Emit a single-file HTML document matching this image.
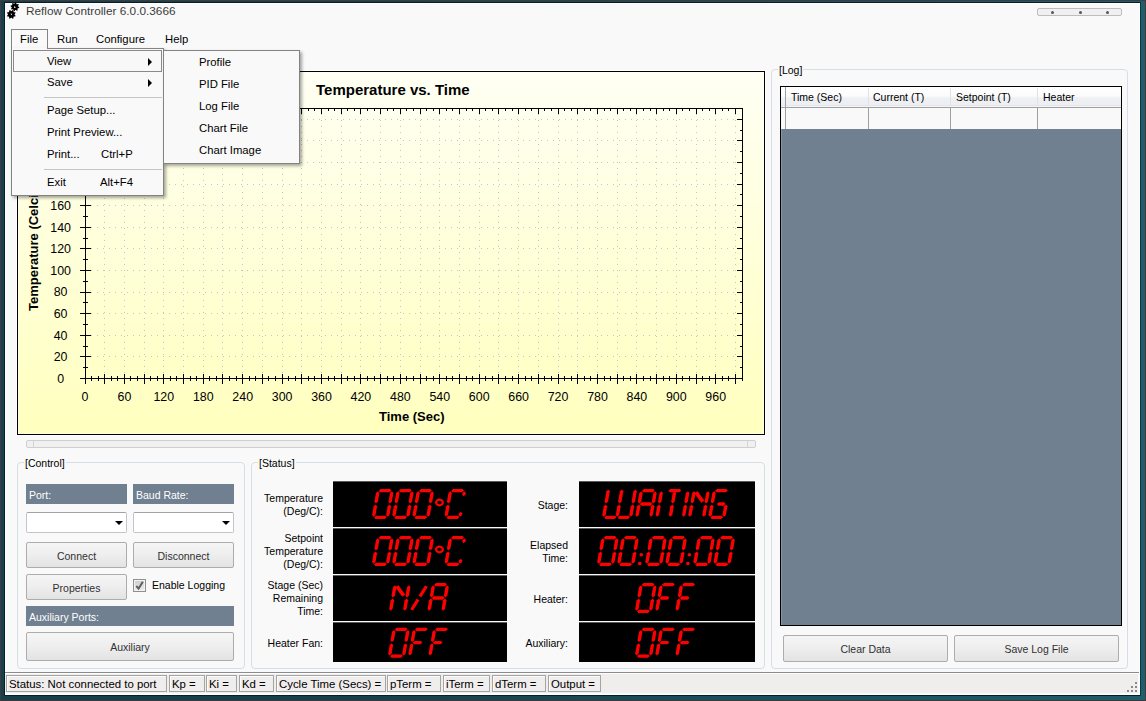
<!DOCTYPE html>
<html><head><meta charset="utf-8"><style>
html,body{margin:0;padding:0;width:1146px;height:701px;overflow:hidden}
body{background:#1f5566;position:relative;font-family:'Liberation Sans', sans-serif}
.abs{position:absolute;box-sizing:content-box}
#frame{position:absolute;left:0;top:0;width:1146px;height:701px;background:linear-gradient(90deg,#173f4c 0,#183f4b 30%,#1f5e6c 100%)}
#content{position:absolute;left:5px;top:3px;width:1133px;height:690px;background:#f9f9f9;border:1px solid #fff}
.menu{font:11.3px 'Liberation Sans', sans-serif;color:#000;white-space:nowrap;line-height:14px}
.ax{font:12.4px 'Liberation Sans', sans-serif;color:#000;white-space:nowrap;line-height:14px}
.lbl{font:10.5px 'Liberation Sans', sans-serif;color:#000;white-space:nowrap;line-height:13px}
.bar{background:#708090;color:#fff;font:10.5px 'Liberation Sans', sans-serif;line-height:20px;padding-top:1px;padding-left:3px;box-sizing:border-box;white-space:nowrap}
.combo{border:1px solid #c2c6cc;border-top-color:#9fa3a8;border-radius:2px;background:#fff}
.btn{border:1px solid #adadad;border-radius:2px;background:linear-gradient(#f5f5f5,#eeeeee 50%,#e3e3e3);text-align:center;font:10.5px 'Liberation Sans', sans-serif;color:#303030;white-space:nowrap}
.gb{border:1px solid #d5dfe5;border-radius:4px}
.gbl{font:10.5px 'Liberation Sans', sans-serif;color:#000;background:#f9f9f9;padding:0 1px;line-height:13px;white-space:nowrap}
.sbp{border:1px solid #a4a4a4;box-shadow:inset 1px 1px 0 #fcfcfc;font:11.4px 'Liberation Sans', sans-serif;color:#000;padding-left:2px;line-height:16px;white-space:nowrap;overflow:hidden}
</style></head><body>
<div id="frame"></div>
<div class="abs" style="left:0;top:0;width:1146px;height:1px;background:#433b3b"></div>
<div class="abs" style="left:0;top:700px;width:1146px;height:1px;background:#3d3939"></div>
<div class="abs" style="left:0;top:0;width:1px;height:701px;background:#433b3b"></div>
<div class="abs" style="left:1145px;top:0;width:1px;height:701px;background:#433b3b"></div>
<div class="abs" style="left:4px;top:2px;width:1137px;height:694px;background:#03202a"></div>
<div class="abs" style="left:1140px;top:2px;width:1px;height:694px;background:#083a44"></div>
<div id="content"></div>
<svg class="abs" style="left:6px;top:2px" width="16" height="19" viewBox="0 0 16 19">
<polygon points="13.28,5.24 13.11,6.08 11.81,6.36 11.45,6.90 11.69,8.21 10.97,8.68 9.85,7.96 9.22,8.08 8.46,9.18 7.62,9.01 7.34,7.71 6.80,7.35 5.49,7.59 5.02,6.87 5.74,5.75 5.62,5.12 4.52,4.36 4.69,3.52 5.99,3.24 6.35,2.70 6.11,1.39 6.83,0.92 7.95,1.64 8.58,1.52 9.34,0.42 10.18,0.59 10.46,1.89 11.00,2.25 12.31,2.01 12.78,2.73 12.06,3.85 12.18,4.48" fill="#000"/><polygon points="9.60,13.73 9.26,14.54 7.92,14.57 7.44,15.04 7.40,16.38 6.58,16.71 5.61,15.79 4.95,15.78 3.97,16.70 3.16,16.36 3.13,15.02 2.66,14.54 1.32,14.50 0.99,13.68 1.91,12.71 1.92,12.05 1.00,11.07 1.34,10.26 2.68,10.23 3.16,9.76 3.20,8.42 4.02,8.09 4.99,9.01 5.65,9.02 6.63,8.10 7.44,8.44 7.47,9.78 7.94,10.26 9.28,10.30 9.61,11.12 8.69,12.09 8.68,12.75" fill="#000"/>
<polygon points="8.3,4.0 9.9,5.4 8.1,5.9" fill="#fff"/><polygon points="4.5,11.8 6.3,11.7 5.4,13.3" fill="#fff"/>
</svg><div class="abs" style="left:26px;top:4px;font:11.8px 'Liberation Sans', sans-serif;color:#3c3c3c;white-space:nowrap">Reflow Controller 6.0.0.3666</div><div class="abs" style="left:1037px;top:8px;width:83px;height:6px;border:1px solid #bdbdbd;border-radius:2px;background:#f0f0f0"></div><div class="abs" style="left:1051px;top:10.5px;width:3px;height:3px;border-radius:2px;background:#555"></div><div class="abs" style="left:1079px;top:10.5px;width:3px;height:3px;border-radius:2px;background:#555"></div><div class="abs" style="left:1106px;top:10.5px;width:3px;height:3px;border-radius:2px;background:#555"></div><svg class="abs" style="left:0;top:0" width="1146" height="701" shape-rendering="crispEdges"><defs><linearGradient id="cg" x1="0" y1="0" x2="0" y2="1"><stop offset="0" stop-color="#fffff4"/><stop offset="1" stop-color="#ffffbe"/></linearGradient></defs><rect x="16" y="70" width="750" height="366" fill="#ffffff"/><rect x="17.5" y="71.5" width="747" height="363" fill="url(#cg)" stroke="#000" stroke-width="1"/><rect x="18.5" y="72.5" width="745" height="361" fill="none" stroke="#ffffff" stroke-opacity="0.45" stroke-width="1"/><line x1="104.5" y1="373" x2="104.5" y2="110" stroke="#c4c4cc" stroke-width="1" stroke-dasharray="1 5"/><line x1="124.5" y1="373" x2="124.5" y2="110" stroke="#c4c4cc" stroke-width="1" stroke-dasharray="1 5"/><line x1="144.5" y1="373" x2="144.5" y2="110" stroke="#c4c4cc" stroke-width="1" stroke-dasharray="1 5"/><line x1="163.5" y1="373" x2="163.5" y2="110" stroke="#c4c4cc" stroke-width="1" stroke-dasharray="1 5"/><line x1="183.5" y1="373" x2="183.5" y2="110" stroke="#c4c4cc" stroke-width="1" stroke-dasharray="1 5"/><line x1="203.5" y1="373" x2="203.5" y2="110" stroke="#c4c4cc" stroke-width="1" stroke-dasharray="1 5"/><line x1="222.5" y1="373" x2="222.5" y2="110" stroke="#c4c4cc" stroke-width="1" stroke-dasharray="1 5"/><line x1="242.5" y1="373" x2="242.5" y2="110" stroke="#c4c4cc" stroke-width="1" stroke-dasharray="1 5"/><line x1="262.5" y1="373" x2="262.5" y2="110" stroke="#c4c4cc" stroke-width="1" stroke-dasharray="1 5"/><line x1="282.5" y1="373" x2="282.5" y2="110" stroke="#c4c4cc" stroke-width="1" stroke-dasharray="1 5"/><line x1="301.5" y1="373" x2="301.5" y2="110" stroke="#c4c4cc" stroke-width="1" stroke-dasharray="1 5"/><line x1="321.5" y1="373" x2="321.5" y2="110" stroke="#c4c4cc" stroke-width="1" stroke-dasharray="1 5"/><line x1="341.5" y1="373" x2="341.5" y2="110" stroke="#c4c4cc" stroke-width="1" stroke-dasharray="1 5"/><line x1="360.5" y1="373" x2="360.5" y2="110" stroke="#c4c4cc" stroke-width="1" stroke-dasharray="1 5"/><line x1="380.5" y1="373" x2="380.5" y2="110" stroke="#c4c4cc" stroke-width="1" stroke-dasharray="1 5"/><line x1="400.5" y1="373" x2="400.5" y2="110" stroke="#c4c4cc" stroke-width="1" stroke-dasharray="1 5"/><line x1="420.5" y1="373" x2="420.5" y2="110" stroke="#c4c4cc" stroke-width="1" stroke-dasharray="1 5"/><line x1="439.5" y1="373" x2="439.5" y2="110" stroke="#c4c4cc" stroke-width="1" stroke-dasharray="1 5"/><line x1="459.5" y1="373" x2="459.5" y2="110" stroke="#c4c4cc" stroke-width="1" stroke-dasharray="1 5"/><line x1="479.5" y1="373" x2="479.5" y2="110" stroke="#c4c4cc" stroke-width="1" stroke-dasharray="1 5"/><line x1="498.5" y1="373" x2="498.5" y2="110" stroke="#c4c4cc" stroke-width="1" stroke-dasharray="1 5"/><line x1="518.5" y1="373" x2="518.5" y2="110" stroke="#c4c4cc" stroke-width="1" stroke-dasharray="1 5"/><line x1="538.5" y1="373" x2="538.5" y2="110" stroke="#c4c4cc" stroke-width="1" stroke-dasharray="1 5"/><line x1="558.5" y1="373" x2="558.5" y2="110" stroke="#c4c4cc" stroke-width="1" stroke-dasharray="1 5"/><line x1="577.5" y1="373" x2="577.5" y2="110" stroke="#c4c4cc" stroke-width="1" stroke-dasharray="1 5"/><line x1="597.5" y1="373" x2="597.5" y2="110" stroke="#c4c4cc" stroke-width="1" stroke-dasharray="1 5"/><line x1="617.5" y1="373" x2="617.5" y2="110" stroke="#c4c4cc" stroke-width="1" stroke-dasharray="1 5"/><line x1="636.5" y1="373" x2="636.5" y2="110" stroke="#c4c4cc" stroke-width="1" stroke-dasharray="1 5"/><line x1="656.5" y1="373" x2="656.5" y2="110" stroke="#c4c4cc" stroke-width="1" stroke-dasharray="1 5"/><line x1="676.5" y1="373" x2="676.5" y2="110" stroke="#c4c4cc" stroke-width="1" stroke-dasharray="1 5"/><line x1="696.5" y1="373" x2="696.5" y2="110" stroke="#c4c4cc" stroke-width="1" stroke-dasharray="1 5"/><line x1="715.5" y1="373" x2="715.5" y2="110" stroke="#c4c4cc" stroke-width="1" stroke-dasharray="1 5"/><line x1="735.5" y1="373" x2="735.5" y2="110" stroke="#c4c4cc" stroke-width="1" stroke-dasharray="1 5"/><line x1="91" y1="356.5" x2="740" y2="356.5" stroke="#c4c4cc" stroke-width="1" stroke-dasharray="1 5"/><line x1="91" y1="335.5" x2="740" y2="335.5" stroke="#c4c4cc" stroke-width="1" stroke-dasharray="1 5"/><line x1="91" y1="313.5" x2="740" y2="313.5" stroke="#c4c4cc" stroke-width="1" stroke-dasharray="1 5"/><line x1="91" y1="292.5" x2="740" y2="292.5" stroke="#c4c4cc" stroke-width="1" stroke-dasharray="1 5"/><line x1="91" y1="270.5" x2="740" y2="270.5" stroke="#c4c4cc" stroke-width="1" stroke-dasharray="1 5"/><line x1="91" y1="248.5" x2="740" y2="248.5" stroke="#c4c4cc" stroke-width="1" stroke-dasharray="1 5"/><line x1="91" y1="227.5" x2="740" y2="227.5" stroke="#c4c4cc" stroke-width="1" stroke-dasharray="1 5"/><line x1="91" y1="205.5" x2="740" y2="205.5" stroke="#c4c4cc" stroke-width="1" stroke-dasharray="1 5"/><line x1="91" y1="184.5" x2="740" y2="184.5" stroke="#c4c4cc" stroke-width="1" stroke-dasharray="1 5"/><line x1="91" y1="162.5" x2="740" y2="162.5" stroke="#c4c4cc" stroke-width="1" stroke-dasharray="1 5"/><line x1="91" y1="140.5" x2="740" y2="140.5" stroke="#c4c4cc" stroke-width="1" stroke-dasharray="1 5"/><line x1="91" y1="119.5" x2="740" y2="119.5" stroke="#c4c4cc" stroke-width="1" stroke-dasharray="1 5"/><rect x="85.5" y="108.5" width="657" height="270" fill="none" stroke="#000" stroke-width="1"/><line x1="85.5" y1="373.5" x2="85.5" y2="383.5" stroke="#000"/><line x1="85.5" y1="108.5" x2="85.5" y2="113.5" stroke="#000"/><line x1="91.5" y1="375.5" x2="91.5" y2="380.5" stroke="#000"/><line x1="91.5" y1="108.5" x2="91.5" y2="111.0" stroke="#000"/><line x1="98.5" y1="375.5" x2="98.5" y2="380.5" stroke="#000"/><line x1="98.5" y1="108.5" x2="98.5" y2="111.0" stroke="#000"/><line x1="104.5" y1="373.5" x2="104.5" y2="383.5" stroke="#000"/><line x1="104.5" y1="108.5" x2="104.5" y2="113.5" stroke="#000"/><line x1="111.5" y1="375.5" x2="111.5" y2="380.5" stroke="#000"/><line x1="111.5" y1="108.5" x2="111.5" y2="111.0" stroke="#000"/><line x1="117.5" y1="375.5" x2="117.5" y2="380.5" stroke="#000"/><line x1="117.5" y1="108.5" x2="117.5" y2="111.0" stroke="#000"/><line x1="124.5" y1="373.5" x2="124.5" y2="383.5" stroke="#000"/><line x1="124.5" y1="108.5" x2="124.5" y2="113.5" stroke="#000"/><line x1="130.5" y1="375.5" x2="130.5" y2="380.5" stroke="#000"/><line x1="130.5" y1="108.5" x2="130.5" y2="111.0" stroke="#000"/><line x1="137.5" y1="375.5" x2="137.5" y2="380.5" stroke="#000"/><line x1="137.5" y1="108.5" x2="137.5" y2="111.0" stroke="#000"/><line x1="144.5" y1="373.5" x2="144.5" y2="383.5" stroke="#000"/><line x1="144.5" y1="108.5" x2="144.5" y2="113.5" stroke="#000"/><line x1="150.5" y1="375.5" x2="150.5" y2="380.5" stroke="#000"/><line x1="150.5" y1="108.5" x2="150.5" y2="111.0" stroke="#000"/><line x1="157.5" y1="375.5" x2="157.5" y2="380.5" stroke="#000"/><line x1="157.5" y1="108.5" x2="157.5" y2="111.0" stroke="#000"/><line x1="163.5" y1="373.5" x2="163.5" y2="383.5" stroke="#000"/><line x1="163.5" y1="108.5" x2="163.5" y2="113.5" stroke="#000"/><line x1="170.5" y1="375.5" x2="170.5" y2="380.5" stroke="#000"/><line x1="170.5" y1="108.5" x2="170.5" y2="111.0" stroke="#000"/><line x1="176.5" y1="375.5" x2="176.5" y2="380.5" stroke="#000"/><line x1="176.5" y1="108.5" x2="176.5" y2="111.0" stroke="#000"/><line x1="183.5" y1="373.5" x2="183.5" y2="383.5" stroke="#000"/><line x1="183.5" y1="108.5" x2="183.5" y2="113.5" stroke="#000"/><line x1="190.5" y1="375.5" x2="190.5" y2="380.5" stroke="#000"/><line x1="190.5" y1="108.5" x2="190.5" y2="111.0" stroke="#000"/><line x1="196.5" y1="375.5" x2="196.5" y2="380.5" stroke="#000"/><line x1="196.5" y1="108.5" x2="196.5" y2="111.0" stroke="#000"/><line x1="203.5" y1="373.5" x2="203.5" y2="383.5" stroke="#000"/><line x1="203.5" y1="108.5" x2="203.5" y2="113.5" stroke="#000"/><line x1="209.5" y1="375.5" x2="209.5" y2="380.5" stroke="#000"/><line x1="209.5" y1="108.5" x2="209.5" y2="111.0" stroke="#000"/><line x1="216.5" y1="375.5" x2="216.5" y2="380.5" stroke="#000"/><line x1="216.5" y1="108.5" x2="216.5" y2="111.0" stroke="#000"/><line x1="222.5" y1="373.5" x2="222.5" y2="383.5" stroke="#000"/><line x1="222.5" y1="108.5" x2="222.5" y2="113.5" stroke="#000"/><line x1="229.5" y1="375.5" x2="229.5" y2="380.5" stroke="#000"/><line x1="229.5" y1="108.5" x2="229.5" y2="111.0" stroke="#000"/><line x1="236.5" y1="375.5" x2="236.5" y2="380.5" stroke="#000"/><line x1="236.5" y1="108.5" x2="236.5" y2="111.0" stroke="#000"/><line x1="242.5" y1="373.5" x2="242.5" y2="383.5" stroke="#000"/><line x1="242.5" y1="108.5" x2="242.5" y2="113.5" stroke="#000"/><line x1="249.5" y1="375.5" x2="249.5" y2="380.5" stroke="#000"/><line x1="249.5" y1="108.5" x2="249.5" y2="111.0" stroke="#000"/><line x1="255.5" y1="375.5" x2="255.5" y2="380.5" stroke="#000"/><line x1="255.5" y1="108.5" x2="255.5" y2="111.0" stroke="#000"/><line x1="262.5" y1="373.5" x2="262.5" y2="383.5" stroke="#000"/><line x1="262.5" y1="108.5" x2="262.5" y2="113.5" stroke="#000"/><line x1="268.5" y1="375.5" x2="268.5" y2="380.5" stroke="#000"/><line x1="268.5" y1="108.5" x2="268.5" y2="111.0" stroke="#000"/><line x1="275.5" y1="375.5" x2="275.5" y2="380.5" stroke="#000"/><line x1="275.5" y1="108.5" x2="275.5" y2="111.0" stroke="#000"/><line x1="282.5" y1="373.5" x2="282.5" y2="383.5" stroke="#000"/><line x1="282.5" y1="108.5" x2="282.5" y2="113.5" stroke="#000"/><line x1="288.5" y1="375.5" x2="288.5" y2="380.5" stroke="#000"/><line x1="288.5" y1="108.5" x2="288.5" y2="111.0" stroke="#000"/><line x1="295.5" y1="375.5" x2="295.5" y2="380.5" stroke="#000"/><line x1="295.5" y1="108.5" x2="295.5" y2="111.0" stroke="#000"/><line x1="301.5" y1="373.5" x2="301.5" y2="383.5" stroke="#000"/><line x1="301.5" y1="108.5" x2="301.5" y2="113.5" stroke="#000"/><line x1="308.5" y1="375.5" x2="308.5" y2="380.5" stroke="#000"/><line x1="308.5" y1="108.5" x2="308.5" y2="111.0" stroke="#000"/><line x1="314.5" y1="375.5" x2="314.5" y2="380.5" stroke="#000"/><line x1="314.5" y1="108.5" x2="314.5" y2="111.0" stroke="#000"/><line x1="321.5" y1="373.5" x2="321.5" y2="383.5" stroke="#000"/><line x1="321.5" y1="108.5" x2="321.5" y2="113.5" stroke="#000"/><line x1="328.5" y1="375.5" x2="328.5" y2="380.5" stroke="#000"/><line x1="328.5" y1="108.5" x2="328.5" y2="111.0" stroke="#000"/><line x1="334.5" y1="375.5" x2="334.5" y2="380.5" stroke="#000"/><line x1="334.5" y1="108.5" x2="334.5" y2="111.0" stroke="#000"/><line x1="341.5" y1="373.5" x2="341.5" y2="383.5" stroke="#000"/><line x1="341.5" y1="108.5" x2="341.5" y2="113.5" stroke="#000"/><line x1="347.5" y1="375.5" x2="347.5" y2="380.5" stroke="#000"/><line x1="347.5" y1="108.5" x2="347.5" y2="111.0" stroke="#000"/><line x1="354.5" y1="375.5" x2="354.5" y2="380.5" stroke="#000"/><line x1="354.5" y1="108.5" x2="354.5" y2="111.0" stroke="#000"/><line x1="360.5" y1="373.5" x2="360.5" y2="383.5" stroke="#000"/><line x1="360.5" y1="108.5" x2="360.5" y2="113.5" stroke="#000"/><line x1="367.5" y1="375.5" x2="367.5" y2="380.5" stroke="#000"/><line x1="367.5" y1="108.5" x2="367.5" y2="111.0" stroke="#000"/><line x1="374.5" y1="375.5" x2="374.5" y2="380.5" stroke="#000"/><line x1="374.5" y1="108.5" x2="374.5" y2="111.0" stroke="#000"/><line x1="380.5" y1="373.5" x2="380.5" y2="383.5" stroke="#000"/><line x1="380.5" y1="108.5" x2="380.5" y2="113.5" stroke="#000"/><line x1="387.5" y1="375.5" x2="387.5" y2="380.5" stroke="#000"/><line x1="387.5" y1="108.5" x2="387.5" y2="111.0" stroke="#000"/><line x1="393.5" y1="375.5" x2="393.5" y2="380.5" stroke="#000"/><line x1="393.5" y1="108.5" x2="393.5" y2="111.0" stroke="#000"/><line x1="400.5" y1="373.5" x2="400.5" y2="383.5" stroke="#000"/><line x1="400.5" y1="108.5" x2="400.5" y2="113.5" stroke="#000"/><line x1="406.5" y1="375.5" x2="406.5" y2="380.5" stroke="#000"/><line x1="406.5" y1="108.5" x2="406.5" y2="111.0" stroke="#000"/><line x1="413.5" y1="375.5" x2="413.5" y2="380.5" stroke="#000"/><line x1="413.5" y1="108.5" x2="413.5" y2="111.0" stroke="#000"/><line x1="420.5" y1="373.5" x2="420.5" y2="383.5" stroke="#000"/><line x1="420.5" y1="108.5" x2="420.5" y2="113.5" stroke="#000"/><line x1="426.5" y1="375.5" x2="426.5" y2="380.5" stroke="#000"/><line x1="426.5" y1="108.5" x2="426.5" y2="111.0" stroke="#000"/><line x1="433.5" y1="375.5" x2="433.5" y2="380.5" stroke="#000"/><line x1="433.5" y1="108.5" x2="433.5" y2="111.0" stroke="#000"/><line x1="439.5" y1="373.5" x2="439.5" y2="383.5" stroke="#000"/><line x1="439.5" y1="108.5" x2="439.5" y2="113.5" stroke="#000"/><line x1="446.5" y1="375.5" x2="446.5" y2="380.5" stroke="#000"/><line x1="446.5" y1="108.5" x2="446.5" y2="111.0" stroke="#000"/><line x1="452.5" y1="375.5" x2="452.5" y2="380.5" stroke="#000"/><line x1="452.5" y1="108.5" x2="452.5" y2="111.0" stroke="#000"/><line x1="459.5" y1="373.5" x2="459.5" y2="383.5" stroke="#000"/><line x1="459.5" y1="108.5" x2="459.5" y2="113.5" stroke="#000"/><line x1="466.5" y1="375.5" x2="466.5" y2="380.5" stroke="#000"/><line x1="466.5" y1="108.5" x2="466.5" y2="111.0" stroke="#000"/><line x1="472.5" y1="375.5" x2="472.5" y2="380.5" stroke="#000"/><line x1="472.5" y1="108.5" x2="472.5" y2="111.0" stroke="#000"/><line x1="479.5" y1="373.5" x2="479.5" y2="383.5" stroke="#000"/><line x1="479.5" y1="108.5" x2="479.5" y2="113.5" stroke="#000"/><line x1="485.5" y1="375.5" x2="485.5" y2="380.5" stroke="#000"/><line x1="485.5" y1="108.5" x2="485.5" y2="111.0" stroke="#000"/><line x1="492.5" y1="375.5" x2="492.5" y2="380.5" stroke="#000"/><line x1="492.5" y1="108.5" x2="492.5" y2="111.0" stroke="#000"/><line x1="498.5" y1="373.5" x2="498.5" y2="383.5" stroke="#000"/><line x1="498.5" y1="108.5" x2="498.5" y2="113.5" stroke="#000"/><line x1="505.5" y1="375.5" x2="505.5" y2="380.5" stroke="#000"/><line x1="505.5" y1="108.5" x2="505.5" y2="111.0" stroke="#000"/><line x1="512.5" y1="375.5" x2="512.5" y2="380.5" stroke="#000"/><line x1="512.5" y1="108.5" x2="512.5" y2="111.0" stroke="#000"/><line x1="518.5" y1="373.5" x2="518.5" y2="383.5" stroke="#000"/><line x1="518.5" y1="108.5" x2="518.5" y2="113.5" stroke="#000"/><line x1="525.5" y1="375.5" x2="525.5" y2="380.5" stroke="#000"/><line x1="525.5" y1="108.5" x2="525.5" y2="111.0" stroke="#000"/><line x1="531.5" y1="375.5" x2="531.5" y2="380.5" stroke="#000"/><line x1="531.5" y1="108.5" x2="531.5" y2="111.0" stroke="#000"/><line x1="538.5" y1="373.5" x2="538.5" y2="383.5" stroke="#000"/><line x1="538.5" y1="108.5" x2="538.5" y2="113.5" stroke="#000"/><line x1="544.5" y1="375.5" x2="544.5" y2="380.5" stroke="#000"/><line x1="544.5" y1="108.5" x2="544.5" y2="111.0" stroke="#000"/><line x1="551.5" y1="375.5" x2="551.5" y2="380.5" stroke="#000"/><line x1="551.5" y1="108.5" x2="551.5" y2="111.0" stroke="#000"/><line x1="558.5" y1="373.5" x2="558.5" y2="383.5" stroke="#000"/><line x1="558.5" y1="108.5" x2="558.5" y2="113.5" stroke="#000"/><line x1="564.5" y1="375.5" x2="564.5" y2="380.5" stroke="#000"/><line x1="564.5" y1="108.5" x2="564.5" y2="111.0" stroke="#000"/><line x1="571.5" y1="375.5" x2="571.5" y2="380.5" stroke="#000"/><line x1="571.5" y1="108.5" x2="571.5" y2="111.0" stroke="#000"/><line x1="577.5" y1="373.5" x2="577.5" y2="383.5" stroke="#000"/><line x1="577.5" y1="108.5" x2="577.5" y2="113.5" stroke="#000"/><line x1="584.5" y1="375.5" x2="584.5" y2="380.5" stroke="#000"/><line x1="584.5" y1="108.5" x2="584.5" y2="111.0" stroke="#000"/><line x1="590.5" y1="375.5" x2="590.5" y2="380.5" stroke="#000"/><line x1="590.5" y1="108.5" x2="590.5" y2="111.0" stroke="#000"/><line x1="597.5" y1="373.5" x2="597.5" y2="383.5" stroke="#000"/><line x1="597.5" y1="108.5" x2="597.5" y2="113.5" stroke="#000"/><line x1="604.5" y1="375.5" x2="604.5" y2="380.5" stroke="#000"/><line x1="604.5" y1="108.5" x2="604.5" y2="111.0" stroke="#000"/><line x1="610.5" y1="375.5" x2="610.5" y2="380.5" stroke="#000"/><line x1="610.5" y1="108.5" x2="610.5" y2="111.0" stroke="#000"/><line x1="617.5" y1="373.5" x2="617.5" y2="383.5" stroke="#000"/><line x1="617.5" y1="108.5" x2="617.5" y2="113.5" stroke="#000"/><line x1="623.5" y1="375.5" x2="623.5" y2="380.5" stroke="#000"/><line x1="623.5" y1="108.5" x2="623.5" y2="111.0" stroke="#000"/><line x1="630.5" y1="375.5" x2="630.5" y2="380.5" stroke="#000"/><line x1="630.5" y1="108.5" x2="630.5" y2="111.0" stroke="#000"/><line x1="636.5" y1="373.5" x2="636.5" y2="383.5" stroke="#000"/><line x1="636.5" y1="108.5" x2="636.5" y2="113.5" stroke="#000"/><line x1="643.5" y1="375.5" x2="643.5" y2="380.5" stroke="#000"/><line x1="643.5" y1="108.5" x2="643.5" y2="111.0" stroke="#000"/><line x1="650.5" y1="375.5" x2="650.5" y2="380.5" stroke="#000"/><line x1="650.5" y1="108.5" x2="650.5" y2="111.0" stroke="#000"/><line x1="656.5" y1="373.5" x2="656.5" y2="383.5" stroke="#000"/><line x1="656.5" y1="108.5" x2="656.5" y2="113.5" stroke="#000"/><line x1="663.5" y1="375.5" x2="663.5" y2="380.5" stroke="#000"/><line x1="663.5" y1="108.5" x2="663.5" y2="111.0" stroke="#000"/><line x1="669.5" y1="375.5" x2="669.5" y2="380.5" stroke="#000"/><line x1="669.5" y1="108.5" x2="669.5" y2="111.0" stroke="#000"/><line x1="676.5" y1="373.5" x2="676.5" y2="383.5" stroke="#000"/><line x1="676.5" y1="108.5" x2="676.5" y2="113.5" stroke="#000"/><line x1="682.5" y1="375.5" x2="682.5" y2="380.5" stroke="#000"/><line x1="682.5" y1="108.5" x2="682.5" y2="111.0" stroke="#000"/><line x1="689.5" y1="375.5" x2="689.5" y2="380.5" stroke="#000"/><line x1="689.5" y1="108.5" x2="689.5" y2="111.0" stroke="#000"/><line x1="696.5" y1="373.5" x2="696.5" y2="383.5" stroke="#000"/><line x1="696.5" y1="108.5" x2="696.5" y2="113.5" stroke="#000"/><line x1="702.5" y1="375.5" x2="702.5" y2="380.5" stroke="#000"/><line x1="702.5" y1="108.5" x2="702.5" y2="111.0" stroke="#000"/><line x1="709.5" y1="375.5" x2="709.5" y2="380.5" stroke="#000"/><line x1="709.5" y1="108.5" x2="709.5" y2="111.0" stroke="#000"/><line x1="715.5" y1="373.5" x2="715.5" y2="383.5" stroke="#000"/><line x1="715.5" y1="108.5" x2="715.5" y2="113.5" stroke="#000"/><line x1="722.5" y1="375.5" x2="722.5" y2="380.5" stroke="#000"/><line x1="722.5" y1="108.5" x2="722.5" y2="111.0" stroke="#000"/><line x1="728.5" y1="375.5" x2="728.5" y2="380.5" stroke="#000"/><line x1="728.5" y1="108.5" x2="728.5" y2="111.0" stroke="#000"/><line x1="735.5" y1="373.5" x2="735.5" y2="383.5" stroke="#000"/><line x1="735.5" y1="108.5" x2="735.5" y2="113.5" stroke="#000"/><line x1="742.5" y1="375.5" x2="742.5" y2="380.5" stroke="#000"/><line x1="742.5" y1="108.5" x2="742.5" y2="111.0" stroke="#000"/><line x1="79.5" y1="378.5" x2="90.5" y2="378.5" stroke="#000"/><line x1="736.5" y1="378.5" x2="742.5" y2="378.5" stroke="#000"/><line x1="83.0" y1="367.5" x2="87.5" y2="367.5" stroke="#000"/><line x1="739.5" y1="367.5" x2="742.5" y2="367.5" stroke="#000"/><line x1="79.5" y1="356.5" x2="90.5" y2="356.5" stroke="#000"/><line x1="736.5" y1="356.5" x2="742.5" y2="356.5" stroke="#000"/><line x1="83.0" y1="346.5" x2="87.5" y2="346.5" stroke="#000"/><line x1="739.5" y1="346.5" x2="742.5" y2="346.5" stroke="#000"/><line x1="79.5" y1="335.5" x2="90.5" y2="335.5" stroke="#000"/><line x1="736.5" y1="335.5" x2="742.5" y2="335.5" stroke="#000"/><line x1="83.0" y1="324.5" x2="87.5" y2="324.5" stroke="#000"/><line x1="739.5" y1="324.5" x2="742.5" y2="324.5" stroke="#000"/><line x1="79.5" y1="313.5" x2="90.5" y2="313.5" stroke="#000"/><line x1="736.5" y1="313.5" x2="742.5" y2="313.5" stroke="#000"/><line x1="83.0" y1="302.5" x2="87.5" y2="302.5" stroke="#000"/><line x1="739.5" y1="302.5" x2="742.5" y2="302.5" stroke="#000"/><line x1="79.5" y1="292.5" x2="90.5" y2="292.5" stroke="#000"/><line x1="736.5" y1="292.5" x2="742.5" y2="292.5" stroke="#000"/><line x1="83.0" y1="281.5" x2="87.5" y2="281.5" stroke="#000"/><line x1="739.5" y1="281.5" x2="742.5" y2="281.5" stroke="#000"/><line x1="79.5" y1="270.5" x2="90.5" y2="270.5" stroke="#000"/><line x1="736.5" y1="270.5" x2="742.5" y2="270.5" stroke="#000"/><line x1="83.0" y1="259.5" x2="87.5" y2="259.5" stroke="#000"/><line x1="739.5" y1="259.5" x2="742.5" y2="259.5" stroke="#000"/><line x1="79.5" y1="248.5" x2="90.5" y2="248.5" stroke="#000"/><line x1="736.5" y1="248.5" x2="742.5" y2="248.5" stroke="#000"/><line x1="83.0" y1="238.5" x2="87.5" y2="238.5" stroke="#000"/><line x1="739.5" y1="238.5" x2="742.5" y2="238.5" stroke="#000"/><line x1="79.5" y1="227.5" x2="90.5" y2="227.5" stroke="#000"/><line x1="736.5" y1="227.5" x2="742.5" y2="227.5" stroke="#000"/><line x1="83.0" y1="216.5" x2="87.5" y2="216.5" stroke="#000"/><line x1="739.5" y1="216.5" x2="742.5" y2="216.5" stroke="#000"/><line x1="79.5" y1="205.5" x2="90.5" y2="205.5" stroke="#000"/><line x1="736.5" y1="205.5" x2="742.5" y2="205.5" stroke="#000"/><line x1="83.0" y1="194.5" x2="87.5" y2="194.5" stroke="#000"/><line x1="739.5" y1="194.5" x2="742.5" y2="194.5" stroke="#000"/><line x1="79.5" y1="184.5" x2="90.5" y2="184.5" stroke="#000"/><line x1="736.5" y1="184.5" x2="742.5" y2="184.5" stroke="#000"/><line x1="83.0" y1="173.5" x2="87.5" y2="173.5" stroke="#000"/><line x1="739.5" y1="173.5" x2="742.5" y2="173.5" stroke="#000"/><line x1="79.5" y1="162.5" x2="90.5" y2="162.5" stroke="#000"/><line x1="736.5" y1="162.5" x2="742.5" y2="162.5" stroke="#000"/><line x1="83.0" y1="151.5" x2="87.5" y2="151.5" stroke="#000"/><line x1="739.5" y1="151.5" x2="742.5" y2="151.5" stroke="#000"/><line x1="79.5" y1="140.5" x2="90.5" y2="140.5" stroke="#000"/><line x1="736.5" y1="140.5" x2="742.5" y2="140.5" stroke="#000"/><line x1="83.0" y1="130.5" x2="87.5" y2="130.5" stroke="#000"/><line x1="739.5" y1="130.5" x2="742.5" y2="130.5" stroke="#000"/><line x1="79.5" y1="119.5" x2="90.5" y2="119.5" stroke="#000"/><line x1="736.5" y1="119.5" x2="742.5" y2="119.5" stroke="#000"/><line x1="83.0" y1="108.5" x2="87.5" y2="108.5" stroke="#000"/><line x1="739.5" y1="108.5" x2="742.5" y2="108.5" stroke="#000"/></svg><div class="abs ax" style="left:55.0px;top:389.5px;width:60px;text-align:center">0</div><div class="abs ax" style="left:94.4px;top:389.5px;width:60px;text-align:center">60</div><div class="abs ax" style="left:133.8px;top:389.5px;width:60px;text-align:center">120</div><div class="abs ax" style="left:173.3px;top:389.5px;width:60px;text-align:center">180</div><div class="abs ax" style="left:212.7px;top:389.5px;width:60px;text-align:center">240</div><div class="abs ax" style="left:252.1px;top:389.5px;width:60px;text-align:center">300</div><div class="abs ax" style="left:291.5px;top:389.5px;width:60px;text-align:center">360</div><div class="abs ax" style="left:330.9px;top:389.5px;width:60px;text-align:center">420</div><div class="abs ax" style="left:370.4px;top:389.5px;width:60px;text-align:center">480</div><div class="abs ax" style="left:409.8px;top:389.5px;width:60px;text-align:center">540</div><div class="abs ax" style="left:449.2px;top:389.5px;width:60px;text-align:center">600</div><div class="abs ax" style="left:488.6px;top:389.5px;width:60px;text-align:center">660</div><div class="abs ax" style="left:528.0px;top:389.5px;width:60px;text-align:center">720</div><div class="abs ax" style="left:567.5px;top:389.5px;width:60px;text-align:center">780</div><div class="abs ax" style="left:606.9px;top:389.5px;width:60px;text-align:center">840</div><div class="abs ax" style="left:646.3px;top:389.5px;width:60px;text-align:center">900</div><div class="abs ax" style="left:685.7px;top:389.5px;width:60px;text-align:center">960</div><div class="abs ax" style="left:30.6px;top:371.7px;width:60px;text-align:center">0</div><div class="abs ax" style="left:30.6px;top:350.1px;width:60px;text-align:center">20</div><div class="abs ax" style="left:30.6px;top:328.5px;width:60px;text-align:center">40</div><div class="abs ax" style="left:30.6px;top:306.9px;width:60px;text-align:center">60</div><div class="abs ax" style="left:30.6px;top:285.3px;width:60px;text-align:center">80</div><div class="abs ax" style="left:30.6px;top:263.7px;width:60px;text-align:center">100</div><div class="abs ax" style="left:30.6px;top:242.1px;width:60px;text-align:center">120</div><div class="abs ax" style="left:30.6px;top:220.5px;width:60px;text-align:center">140</div><div class="abs ax" style="left:30.6px;top:198.9px;width:60px;text-align:center">160</div><div class="abs ax" style="left:30.6px;top:177.3px;width:60px;text-align:center">180</div><div class="abs ax" style="left:30.6px;top:155.7px;width:60px;text-align:center">200</div><div class="abs ax" style="left:30.6px;top:134.1px;width:60px;text-align:center">220</div><div class="abs ax" style="left:30.6px;top:112.5px;width:60px;text-align:center">240</div><div class="abs" style="left:316px;top:81px;font:bold 15px 'Liberation Sans', sans-serif;color:#000;white-space:nowrap">Temperature vs. Time</div><div class="abs" style="left:379px;top:408.5px;font:bold 13px 'Liberation Sans', sans-serif;color:#000;white-space:nowrap">Time (Sec)</div><div class="abs" style="left:26px;top:311px;transform-origin:0 0;transform:rotate(-90deg);font:bold 13px 'Liberation Sans', sans-serif;color:#000;white-space:nowrap">Temperature (Celcius)</div><div class="abs" style="left:26px;top:440px;width:728px;height:6px;border:1px solid #cfcfcf;border-radius:2px;background:#f0f0f0"></div><div class="abs" style="left:33px;top:441px;width:1px;height:6px;background:#d4d4d4"></div><div class="abs" style="left:747px;top:441px;width:1px;height:6px;background:#d4d4d4"></div><div class="abs" style="left:11px;top:29px;width:35px;height:20px;border:1px solid #838383;border-bottom:none;background:#f9f9f9"></div><div class="abs menu" style="left:20px;top:32px">File</div><div class="abs menu" style="left:57px;top:32px">Run</div><div class="abs menu" style="left:96px;top:32px">Configure</div><div class="abs menu" style="left:165px;top:32px">Help</div><div class="abs" style="left:11px;top:48px;width:151px;height:147px;border:1px solid #838383;border-top:none;background:#f9f9f9;box-shadow:2px 2px 3px rgba(0,0,0,0.35)"></div><div class="abs" style="left:47px;top:48px;width:116px;height:1px;background:#838383"></div><div class="abs" style="left:13px;top:50px;width:147px;height:20px;border:1px solid #8a8a8a;background:#f8f8f8"></div><div class="abs menu" style="left:47px;top:53.5px">View</div><div class="abs" style="left:148px;top:57.5px;width:0;height:0;border-left:4px solid #000;border-top:4px solid transparent;border-bottom:4px solid transparent"></div><div class="abs menu" style="left:47px;top:75px">Save</div><div class="abs" style="left:148px;top:79px;width:0;height:0;border-left:4px solid #000;border-top:4px solid transparent;border-bottom:4px solid transparent"></div><div class="abs menu" style="left:47px;top:102.5px">Page Setup...</div><div class="abs menu" style="left:47px;top:125px">Print Preview...</div><div class="abs menu" style="left:47px;top:146.5px">Print...</div><div class="abs menu" style="left:101px;top:146.5px">Ctrl+P</div><div class="abs menu" style="left:47px;top:174.5px">Exit</div><div class="abs menu" style="left:100px;top:174.5px">Alt+F4</div><div class="abs" style="left:44px;top:97px;width:118px;height:1px;background:#c5c5c5"></div><div class="abs" style="left:44px;top:169px;width:118px;height:1px;background:#c5c5c5"></div><div class="abs" style="left:163px;top:50px;width:135px;height:112px;border:1px solid #838383;background:#f9f9f9;box-shadow:2px 2px 3px rgba(0,0,0,0.35)"></div><div class="abs menu" style="left:199px;top:55px">Profile</div><div class="abs menu" style="left:199px;top:77px">PID File</div><div class="abs menu" style="left:199px;top:99px">Log File</div><div class="abs menu" style="left:199px;top:121px">Chart File</div><div class="abs menu" style="left:199px;top:143px">Chart Image</div><div class="abs gb" style="left:17px;top:462px;width:226px;height:205px"></div><div class="abs gbl" style="left:24px;top:456.5px">[Control]</div><div class="abs bar" style="left:26px;top:484px;width:101px;height:20px">Port:</div><div class="abs bar" style="left:133px;top:484px;width:101px;height:20px">Baud Rate:</div><div class="abs combo" style="left:26px;top:512px;width:99px;height:19px"></div><div class="abs combo" style="left:133px;top:512px;width:99px;height:19px"></div><div class="abs" style="left:115px;top:521px;width:0;height:0;border-top:4px solid #000;border-left:4px solid transparent;border-right:4px solid transparent"></div><div class="abs" style="left:222px;top:521px;width:0;height:0;border-top:4px solid #000;border-left:4px solid transparent;border-right:4px solid transparent"></div><div class="abs btn" style="left:26px;top:542px;width:99px;height:23px;padding-top:1px;line-height:24px">Connect</div><div class="abs btn" style="left:133px;top:542px;width:99px;height:23px;padding-top:1px;line-height:24px">Disconnect</div><div class="abs btn" style="left:26px;top:574px;width:99px;height:23px;padding-top:1px;line-height:24px">Properties</div><div class="abs" style="left:133px;top:579px;width:11px;height:11px;border:1px solid #8f8f8f;background:#f4f4f4"></div><div class="abs" style="left:135px;top:581px;width:9px;height:9px;background:linear-gradient(#cfcfcf,#ececec)"></div><svg class="abs" style="left:133px;top:579px" width="13" height="13"><path d="M3.3 7 L5.6 9.6 L9.8 2.8" stroke="#5f5f5f" stroke-width="1.9" fill="none"/></svg><div class="abs lbl" style="left:152px;top:579px">Enable Logging</div><div class="abs bar" style="left:26px;top:606px;width:208px;height:20px">Auxiliary Ports:</div><div class="abs btn" style="left:26px;top:632px;width:206px;height:26px;padding-top:1px;line-height:27px">Auxiliary</div><div class="abs gb" style="left:251px;top:462px;width:512px;height:205px"></div><div class="abs gbl" style="left:258px;top:456.5px">[Status]</div><div class="abs lbl" style="left:222px;width:101px;text-align:right;top:492.0px;line-height:13px">Temperature<br>(Deg/C):</div><div class="abs lbl" style="left:222px;width:101px;text-align:right;top:531.8px;line-height:13px">Setpoint<br>Temperature<br>(Deg/C):</div><div class="abs lbl" style="left:222px;width:101px;text-align:right;top:578.8px;line-height:13px">Stage (Sec)<br>Remaining<br>Time:</div><div class="abs lbl" style="left:222px;width:101px;text-align:right;top:636.5px;line-height:13px">Heater Fan:</div><div class="abs lbl" style="left:467px;width:101px;text-align:right;top:498.5px;line-height:13px">Stage:</div><div class="abs lbl" style="left:467px;width:101px;text-align:right;top:539.0px;line-height:13px">Elapsed<br>Time:</div><div class="abs lbl" style="left:467px;width:101px;text-align:right;top:592.5px;line-height:13px">Heater:</div><div class="abs lbl" style="left:467px;width:101px;text-align:right;top:636.5px;line-height:13px">Auxiliary:</div><div class="abs" style="left:333px;top:481px;width:174px;height:46px;background:#000;box-shadow:inset 0 1px 0 #5a5a5a"><svg width="174" height="46" style="position:absolute;left:0;top:0" fill="#f00"><polygon points="45.69,9.65 47.62,8.00 57.12,8.00 58.49,9.65 56.55,11.30 47.05,11.30"/><polygon points="58.98,10.25 60.38,11.95 58.85,20.70 56.85,22.40 55.45,20.70 56.98,11.95"/><polygon points="56.65,23.60 58.05,25.30 56.52,34.05 54.52,35.75 53.12,34.05 54.65,25.30"/><polygon points="41.01,36.35 42.95,34.70 52.45,34.70 53.81,36.35 51.88,38.00 42.38,38.00"/><polygon points="42.65,23.60 44.05,25.30 42.52,34.05 40.52,35.75 39.12,34.05 40.65,25.30"/><polygon points="44.98,10.25 46.38,11.95 44.85,20.70 42.85,22.40 41.45,20.70 42.98,11.95"/><polygon points="65.89,9.65 67.83,8.00 77.33,8.00 78.69,9.65 76.75,11.30 67.25,11.30"/><polygon points="79.18,10.25 80.58,11.95 79.05,20.70 77.06,22.40 75.65,20.70 77.18,11.95"/><polygon points="76.84,23.60 78.25,25.30 76.72,34.05 74.72,35.75 73.32,34.05 74.85,25.30"/><polygon points="61.21,36.35 63.15,34.70 72.65,34.70 74.01,36.35 72.08,38.00 62.58,38.00"/><polygon points="62.85,23.60 64.25,25.30 62.72,34.05 60.72,35.75 59.32,34.05 60.85,25.30"/><polygon points="65.18,10.25 66.58,11.95 65.05,20.70 63.05,22.40 61.65,20.70 63.18,11.95"/><polygon points="86.09,9.65 88.03,8.00 97.53,8.00 98.89,9.65 96.95,11.30 87.45,11.30"/><polygon points="99.38,10.25 100.78,11.95 99.25,20.70 97.26,22.40 95.85,20.70 97.38,11.95"/><polygon points="97.05,23.60 98.45,25.30 96.92,34.05 94.92,35.75 93.52,34.05 95.05,25.30"/><polygon points="81.41,36.35 83.35,34.70 92.85,34.70 94.21,36.35 92.28,38.00 82.78,38.00"/><polygon points="83.05,23.60 84.45,25.30 82.92,34.05 80.92,35.75 79.52,34.05 81.05,25.30"/><polygon points="85.38,10.25 86.78,11.95 85.25,20.70 83.26,22.40 81.85,20.70 83.38,11.95"/><ellipse cx="106.46" cy="21.50" rx="3.4" ry="2.8" fill="none" stroke="#f00" stroke-width="2.2"/><polygon points="118.19,9.65 120.13,8.00 129.62,8.00 130.99,9.65 129.05,11.30 119.55,11.30"/><polygon points="113.51,36.35 115.45,34.70 124.95,34.70 126.31,36.35 124.38,38.00 114.88,38.00"/><polygon points="115.15,23.60 116.55,25.30 115.02,34.05 113.02,35.75 111.62,34.05 113.15,25.30"/><polygon points="117.48,10.25 118.88,11.95 117.35,20.70 115.36,22.40 113.95,20.70 115.48,11.95"/><polygon points="131.48,10.25 132.88,11.95 132.60,13.55 130.61,15.25 129.20,13.55 129.48,11.95"/><polygon points="127.89,30.75 129.30,32.45 129.02,34.05 127.02,35.75 125.62,34.05 125.90,32.45"/></svg></div><div class="abs" style="left:579px;top:481px;width:176px;height:46px;background:#000;box-shadow:inset 0 1px 0 #5a5a5a"><svg width="176" height="46" style="position:absolute;left:0;top:0" fill="#f00"><polygon points="29.42,8.60 30.82,10.30 29.00,20.70 27.00,22.40 25.60,20.70 27.42,10.30"/><polygon points="26.79,23.60 28.20,25.30 26.67,34.05 24.67,35.75 23.27,34.05 24.80,25.30"/><polygon points="42.92,8.60 44.32,10.30 42.50,20.70 40.50,22.40 39.10,20.70 40.92,10.30"/><polygon points="40.29,23.60 41.70,25.30 40.17,34.05 38.17,35.75 36.77,34.05 38.30,25.30"/><polygon points="56.42,8.60 57.82,10.30 56.00,20.70 54.00,22.40 52.60,20.70 54.42,10.30"/><polygon points="53.79,23.60 55.20,25.30 53.67,34.05 51.67,35.75 50.27,34.05 51.80,25.30"/><polygon points="25.16,36.35 27.10,34.70 36.10,34.70 37.46,36.35 35.52,38.00 26.52,38.00"/><polygon points="38.66,36.35 40.60,34.70 49.60,34.70 50.96,36.35 49.02,38.00 40.02,38.00"/><polygon points="63.04,9.65 64.97,8.00 74.47,8.00 75.84,9.65 73.90,11.30 64.40,11.30"/><polygon points="76.33,10.25 77.73,11.95 76.20,20.70 74.20,22.40 72.80,20.70 74.33,11.95"/><polygon points="73.99,23.60 75.40,25.30 73.87,34.05 71.87,35.75 70.47,34.05 72.00,25.30"/><polygon points="59.99,23.60 61.40,25.30 59.87,34.05 57.87,35.75 56.47,34.05 58.00,25.30"/><polygon points="62.33,10.25 63.73,11.95 62.20,20.70 60.20,22.40 58.80,20.70 60.33,11.95"/><polygon points="60.70,23.00 62.64,21.35 72.14,21.35 73.50,23.00 71.56,24.65 62.06,24.65"/><polygon points="82.53,10.25 83.93,11.95 82.40,20.70 80.41,22.40 79.00,20.70 80.53,11.95"/><polygon points="80.19,23.60 81.60,25.30 80.07,34.05 78.07,35.75 76.67,34.05 78.20,25.30"/><polygon points="89.44,9.65 91.38,8.00 100.88,8.00 102.24,9.65 100.30,11.30 90.80,11.30"/><polygon points="95.73,10.25 97.13,11.95 95.60,20.70 93.61,22.40 92.20,20.70 93.73,11.95"/><polygon points="93.39,23.60 94.80,25.30 93.27,34.05 91.27,35.75 89.87,34.05 91.40,25.30"/><polygon points="108.93,10.25 110.33,11.95 108.80,20.70 106.81,22.40 105.40,20.70 106.93,11.95"/><polygon points="106.59,23.60 108.00,25.30 106.47,34.05 104.47,35.75 103.07,34.05 104.60,25.30"/><polygon points="129.13,10.25 130.53,11.95 129.00,20.70 127.01,22.40 125.60,20.70 127.13,11.95"/><polygon points="126.80,23.60 128.20,25.30 126.67,34.05 124.67,35.75 123.27,34.05 124.80,25.30"/><polygon points="112.80,23.60 114.20,25.30 112.67,34.05 110.67,35.75 109.27,34.05 110.80,25.30"/><polygon points="115.13,10.25 116.53,11.95 115.00,20.70 113.01,22.40 111.60,20.70 113.13,11.95"/><polygon points="115.49,12.39 122.37,21.75 125.29,19.46 118.40,10.10"/><polygon points="136.04,9.65 137.97,8.00 147.47,8.00 148.84,9.65 146.90,11.30 137.40,11.30"/><polygon points="147.00,23.60 148.40,25.30 146.87,34.05 144.87,35.75 143.47,34.05 145.00,25.30"/><polygon points="131.36,36.35 133.30,34.70 142.80,34.70 144.16,36.35 142.22,38.00 132.72,38.00"/><polygon points="133.00,23.60 134.40,25.30 132.87,34.05 130.87,35.75 129.47,34.05 131.00,25.30"/><polygon points="135.33,10.25 136.73,11.95 135.20,20.70 133.20,22.40 131.80,20.70 133.33,11.95"/><polygon points="137.90,23.00 139.84,21.35 145.14,21.35 146.50,23.00 144.56,24.65 139.26,24.65"/></svg></div><div class="abs" style="left:333px;top:528px;width:174px;height:46px;background:#000;box-shadow:inset 0 1px 0 #5a5a5a"><svg width="174" height="46" style="position:absolute;left:0;top:0" fill="#f00"><polygon points="45.69,9.65 47.62,8.00 57.12,8.00 58.49,9.65 56.55,11.30 47.05,11.30"/><polygon points="58.98,10.25 60.38,11.95 58.85,20.70 56.85,22.40 55.45,20.70 56.98,11.95"/><polygon points="56.65,23.60 58.05,25.30 56.52,34.05 54.52,35.75 53.12,34.05 54.65,25.30"/><polygon points="41.01,36.35 42.95,34.70 52.45,34.70 53.81,36.35 51.88,38.00 42.38,38.00"/><polygon points="42.65,23.60 44.05,25.30 42.52,34.05 40.52,35.75 39.12,34.05 40.65,25.30"/><polygon points="44.98,10.25 46.38,11.95 44.85,20.70 42.85,22.40 41.45,20.70 42.98,11.95"/><polygon points="65.89,9.65 67.83,8.00 77.33,8.00 78.69,9.65 76.75,11.30 67.25,11.30"/><polygon points="79.18,10.25 80.58,11.95 79.05,20.70 77.06,22.40 75.65,20.70 77.18,11.95"/><polygon points="76.84,23.60 78.25,25.30 76.72,34.05 74.72,35.75 73.32,34.05 74.85,25.30"/><polygon points="61.21,36.35 63.15,34.70 72.65,34.70 74.01,36.35 72.08,38.00 62.58,38.00"/><polygon points="62.85,23.60 64.25,25.30 62.72,34.05 60.72,35.75 59.32,34.05 60.85,25.30"/><polygon points="65.18,10.25 66.58,11.95 65.05,20.70 63.05,22.40 61.65,20.70 63.18,11.95"/><polygon points="86.09,9.65 88.03,8.00 97.53,8.00 98.89,9.65 96.95,11.30 87.45,11.30"/><polygon points="99.38,10.25 100.78,11.95 99.25,20.70 97.26,22.40 95.85,20.70 97.38,11.95"/><polygon points="97.05,23.60 98.45,25.30 96.92,34.05 94.92,35.75 93.52,34.05 95.05,25.30"/><polygon points="81.41,36.35 83.35,34.70 92.85,34.70 94.21,36.35 92.28,38.00 82.78,38.00"/><polygon points="83.05,23.60 84.45,25.30 82.92,34.05 80.92,35.75 79.52,34.05 81.05,25.30"/><polygon points="85.38,10.25 86.78,11.95 85.25,20.70 83.26,22.40 81.85,20.70 83.38,11.95"/><ellipse cx="106.46" cy="21.50" rx="3.4" ry="2.8" fill="none" stroke="#f00" stroke-width="2.2"/><polygon points="118.19,9.65 120.13,8.00 129.62,8.00 130.99,9.65 129.05,11.30 119.55,11.30"/><polygon points="113.51,36.35 115.45,34.70 124.95,34.70 126.31,36.35 124.38,38.00 114.88,38.00"/><polygon points="115.15,23.60 116.55,25.30 115.02,34.05 113.02,35.75 111.62,34.05 113.15,25.30"/><polygon points="117.48,10.25 118.88,11.95 117.35,20.70 115.36,22.40 113.95,20.70 115.48,11.95"/><polygon points="131.48,10.25 132.88,11.95 132.60,13.55 130.61,15.25 129.20,13.55 129.48,11.95"/><polygon points="127.89,30.75 129.30,32.45 129.02,34.05 127.02,35.75 125.62,34.05 125.90,32.45"/></svg></div><div class="abs" style="left:579px;top:528px;width:176px;height:46px;background:#000;box-shadow:inset 0 1px 0 #5a5a5a"><svg width="176" height="46" style="position:absolute;left:0;top:0" fill="#f00"><polygon points="24.74,9.65 26.67,8.00 36.17,8.00 37.54,9.65 35.60,11.30 26.10,11.30"/><polygon points="38.03,10.25 39.43,11.95 37.90,20.70 35.90,22.40 34.50,20.70 36.03,11.95"/><polygon points="35.70,23.60 37.10,25.30 35.57,34.05 33.57,35.75 32.17,34.05 33.70,25.30"/><polygon points="20.06,36.35 22.00,34.70 31.50,34.70 32.86,36.35 30.92,38.00 21.42,38.00"/><polygon points="21.69,23.60 23.10,25.30 21.57,34.05 19.57,35.75 18.17,34.05 19.70,25.30"/><polygon points="24.03,10.25 25.43,11.95 23.90,20.70 21.90,22.40 20.50,20.70 22.03,11.95"/><polygon points="44.94,9.65 46.87,8.00 56.37,8.00 57.74,9.65 55.80,11.30 46.30,11.30"/><polygon points="58.23,10.25 59.63,11.95 58.10,20.70 56.10,22.40 54.70,20.70 56.23,11.95"/><polygon points="55.89,23.60 57.30,25.30 55.77,34.05 53.77,35.75 52.37,34.05 53.90,25.30"/><polygon points="40.26,36.35 42.20,34.70 51.70,34.70 53.06,36.35 51.12,38.00 41.62,38.00"/><polygon points="41.89,23.60 43.30,25.30 41.77,34.05 39.77,35.75 38.37,34.05 39.90,25.30"/><polygon points="44.23,10.25 45.63,11.95 44.10,20.70 42.10,22.40 40.70,20.70 42.23,11.95"/><circle cx="62.28" cy="26.81" r="1.8"/><circle cx="60.76" cy="35.51" r="1.8"/><polygon points="72.84,9.65 74.77,8.00 84.27,8.00 85.64,9.65 83.70,11.30 74.20,11.30"/><polygon points="86.13,10.25 87.53,11.95 86.00,20.70 84.00,22.40 82.60,20.70 84.13,11.95"/><polygon points="83.79,23.60 85.20,25.30 83.67,34.05 81.67,35.75 80.27,34.05 81.80,25.30"/><polygon points="68.16,36.35 70.10,34.70 79.60,34.70 80.96,36.35 79.02,38.00 69.52,38.00"/><polygon points="69.79,23.60 71.20,25.30 69.67,34.05 67.67,35.75 66.27,34.05 67.80,25.30"/><polygon points="72.13,10.25 73.53,11.95 72.00,20.70 70.00,22.40 68.60,20.70 70.13,11.95"/><polygon points="93.04,9.65 94.97,8.00 104.47,8.00 105.84,9.65 103.90,11.30 94.40,11.30"/><polygon points="106.33,10.25 107.73,11.95 106.20,20.70 104.20,22.40 102.80,20.70 104.33,11.95"/><polygon points="103.99,23.60 105.40,25.30 103.87,34.05 101.87,35.75 100.47,34.05 102.00,25.30"/><polygon points="88.36,36.35 90.30,34.70 99.80,34.70 101.16,36.35 99.22,38.00 89.72,38.00"/><polygon points="89.99,23.60 91.40,25.30 89.87,34.05 87.87,35.75 86.47,34.05 88.00,25.30"/><polygon points="92.33,10.25 93.73,11.95 92.20,20.70 90.20,22.40 88.80,20.70 90.33,11.95"/><circle cx="110.38" cy="26.81" r="1.8"/><circle cx="108.86" cy="35.51" r="1.8"/><polygon points="120.94,9.65 122.88,8.00 132.38,8.00 133.74,9.65 131.80,11.30 122.30,11.30"/><polygon points="134.23,10.25 135.63,11.95 134.10,20.70 132.10,22.40 130.70,20.70 132.23,11.95"/><polygon points="131.90,23.60 133.30,25.30 131.77,34.05 129.77,35.75 128.37,34.05 129.90,25.30"/><polygon points="116.26,36.35 118.20,34.70 127.70,34.70 129.06,36.35 127.12,38.00 117.62,38.00"/><polygon points="117.89,23.60 119.30,25.30 117.77,34.05 115.77,35.75 114.37,34.05 115.90,25.30"/><polygon points="120.23,10.25 121.63,11.95 120.10,20.70 118.11,22.40 116.70,20.70 118.23,11.95"/><polygon points="141.14,9.65 143.07,8.00 152.57,8.00 153.94,9.65 152.00,11.30 142.50,11.30"/><polygon points="154.43,10.25 155.83,11.95 154.30,20.70 152.30,22.40 150.90,20.70 152.43,11.95"/><polygon points="152.09,23.60 153.50,25.30 151.97,34.05 149.97,35.75 148.57,34.05 150.10,25.30"/><polygon points="136.46,36.35 138.40,34.70 147.90,34.70 149.26,36.35 147.32,38.00 137.82,38.00"/><polygon points="138.09,23.60 139.50,25.30 137.97,34.05 135.97,35.75 134.57,34.05 136.10,25.30"/><polygon points="140.43,10.25 141.83,11.95 140.30,20.70 138.30,22.40 136.90,20.70 138.43,11.95"/></svg></div><div class="abs" style="left:333px;top:575px;width:174px;height:46px;background:#000;box-shadow:inset 0 1px 0 #5a5a5a"><svg width="174" height="46" style="position:absolute;left:0;top:0" fill="#f00"><polygon points="76.03,10.25 77.43,11.95 75.90,20.70 73.91,22.40 72.50,20.70 74.03,11.95"/><polygon points="73.70,23.60 75.10,25.30 73.57,34.05 71.57,35.75 70.17,34.05 71.70,25.30"/><polygon points="59.70,23.60 61.10,25.30 59.57,34.05 57.57,35.75 56.17,34.05 57.70,25.30"/><polygon points="62.03,10.25 63.43,11.95 61.90,20.70 59.91,22.40 58.50,20.70 60.03,11.95"/><polygon points="62.39,12.39 69.27,21.75 72.19,19.46 65.30,10.10"/><polygon points="91.98,10.43 85.49,20.83 88.35,22.22 94.84,11.82"/><polygon points="83.65,23.78 77.16,34.18 80.02,35.57 86.51,25.17"/><polygon points="101.14,9.65 103.08,8.00 112.58,8.00 113.94,9.65 112.00,11.30 102.50,11.30"/><polygon points="114.43,10.25 115.83,11.95 114.30,20.70 112.31,22.40 110.90,20.70 112.43,11.95"/><polygon points="112.09,23.60 113.50,25.30 111.97,34.05 109.97,35.75 108.57,34.05 110.10,25.30"/><polygon points="98.09,23.60 99.50,25.30 97.97,34.05 95.97,35.75 94.57,34.05 96.10,25.30"/><polygon points="100.43,10.25 101.83,11.95 100.30,20.70 98.31,22.40 96.90,20.70 98.43,11.95"/><polygon points="98.80,23.00 100.74,21.35 110.24,21.35 111.60,23.00 109.66,24.65 100.16,24.65"/></svg></div><div class="abs" style="left:579px;top:575px;width:176px;height:46px;background:#000;box-shadow:inset 0 1px 0 #5a5a5a"><svg width="176" height="46" style="position:absolute;left:0;top:0" fill="#f00"><polygon points="62.74,9.65 64.68,8.00 74.18,8.00 75.54,9.65 73.60,11.30 64.10,11.30"/><polygon points="76.03,10.25 77.43,11.95 75.90,20.70 73.91,22.40 72.50,20.70 74.03,11.95"/><polygon points="73.70,23.60 75.10,25.30 73.57,34.05 71.57,35.75 70.17,34.05 71.70,25.30"/><polygon points="58.06,36.35 60.00,34.70 69.50,34.70 70.86,36.35 68.93,38.00 59.43,38.00"/><polygon points="59.70,23.60 61.10,25.30 59.57,34.05 57.57,35.75 56.17,34.05 57.70,25.30"/><polygon points="62.03,10.25 63.43,11.95 61.90,20.70 59.91,22.40 58.50,20.70 60.03,11.95"/><polygon points="82.94,9.65 84.88,8.00 94.38,8.00 95.74,9.65 93.80,11.30 84.30,11.30"/><polygon points="79.89,23.60 81.30,25.30 79.77,34.05 77.77,35.75 76.37,34.05 77.90,25.30"/><polygon points="82.23,10.25 83.63,11.95 82.10,20.70 80.11,22.40 78.70,20.70 80.23,11.95"/><polygon points="80.60,23.00 82.54,21.35 88.96,21.35 90.32,23.00 88.38,24.65 81.96,24.65"/><polygon points="103.14,9.65 105.08,8.00 114.58,8.00 115.94,9.65 114.00,11.30 104.50,11.30"/><polygon points="100.09,23.60 101.50,25.30 99.97,34.05 97.97,35.75 96.57,34.05 98.10,25.30"/><polygon points="102.43,10.25 103.83,11.95 102.30,20.70 100.31,22.40 98.90,20.70 100.43,11.95"/><polygon points="100.80,23.00 102.74,21.35 109.16,21.35 110.52,23.00 108.58,24.65 102.16,24.65"/></svg></div><div class="abs" style="left:333px;top:622px;width:174px;height:40px;background:#000;box-shadow:inset 0 1px 0 #5a5a5a"><svg width="174" height="40" style="position:absolute;left:0;top:0" fill="#f00"><polygon points="61.74,7.35 63.68,5.70 73.18,5.70 74.54,7.35 72.60,9.00 63.10,9.00"/><polygon points="75.03,7.95 76.43,9.65 74.90,18.40 72.91,20.10 71.50,18.40 73.03,9.65"/><polygon points="72.70,21.30 74.10,23.00 72.57,31.75 70.57,33.45 69.17,31.75 70.70,23.00"/><polygon points="57.06,34.05 59.00,32.40 68.50,32.40 69.86,34.05 67.93,35.70 58.43,35.70"/><polygon points="58.70,21.30 60.10,23.00 58.57,31.75 56.57,33.45 55.17,31.75 56.70,23.00"/><polygon points="61.03,7.95 62.43,9.65 60.90,18.40 58.91,20.10 57.50,18.40 59.03,9.65"/><polygon points="81.94,7.35 83.88,5.70 93.38,5.70 94.74,7.35 92.80,9.00 83.30,9.00"/><polygon points="78.89,21.30 80.30,23.00 78.77,31.75 76.77,33.45 75.37,31.75 76.90,23.00"/><polygon points="81.23,7.95 82.63,9.65 81.10,18.40 79.11,20.10 77.70,18.40 79.23,9.65"/><polygon points="79.60,20.70 81.54,19.05 87.96,19.05 89.32,20.70 87.38,22.35 80.96,22.35"/><polygon points="102.14,7.35 104.08,5.70 113.58,5.70 114.94,7.35 113.00,9.00 103.50,9.00"/><polygon points="99.09,21.30 100.50,23.00 98.97,31.75 96.97,33.45 95.57,31.75 97.10,23.00"/><polygon points="101.43,7.95 102.83,9.65 101.30,18.40 99.31,20.10 97.90,18.40 99.43,9.65"/><polygon points="99.80,20.70 101.74,19.05 108.16,19.05 109.52,20.70 107.58,22.35 101.16,22.35"/></svg></div><div class="abs" style="left:579px;top:622px;width:176px;height:40px;background:#000;box-shadow:inset 0 1px 0 #5a5a5a"><svg width="176" height="40" style="position:absolute;left:0;top:0" fill="#f00"><polygon points="62.74,7.35 64.68,5.70 74.18,5.70 75.54,7.35 73.60,9.00 64.10,9.00"/><polygon points="76.03,7.95 77.43,9.65 75.90,18.40 73.91,20.10 72.50,18.40 74.03,9.65"/><polygon points="73.70,21.30 75.10,23.00 73.57,31.75 71.57,33.45 70.17,31.75 71.70,23.00"/><polygon points="58.06,34.05 60.00,32.40 69.50,32.40 70.86,34.05 68.93,35.70 59.43,35.70"/><polygon points="59.70,21.30 61.10,23.00 59.57,31.75 57.57,33.45 56.17,31.75 57.70,23.00"/><polygon points="62.03,7.95 63.43,9.65 61.90,18.40 59.91,20.10 58.50,18.40 60.03,9.65"/><polygon points="82.94,7.35 84.88,5.70 94.38,5.70 95.74,7.35 93.80,9.00 84.30,9.00"/><polygon points="79.89,21.30 81.30,23.00 79.77,31.75 77.77,33.45 76.37,31.75 77.90,23.00"/><polygon points="82.23,7.95 83.63,9.65 82.10,18.40 80.11,20.10 78.70,18.40 80.23,9.65"/><polygon points="80.60,20.70 82.54,19.05 88.96,19.05 90.32,20.70 88.38,22.35 81.96,22.35"/><polygon points="103.14,7.35 105.08,5.70 114.58,5.70 115.94,7.35 114.00,9.00 104.50,9.00"/><polygon points="100.09,21.30 101.50,23.00 99.97,31.75 97.97,33.45 96.57,31.75 98.10,23.00"/><polygon points="102.43,7.95 103.83,9.65 102.30,18.40 100.31,20.10 98.90,18.40 100.43,9.65"/><polygon points="100.80,20.70 102.74,19.05 109.16,19.05 110.52,20.70 108.58,22.35 102.16,22.35"/></svg></div><div class="abs gb" style="left:771px;top:69px;width:355px;height:598px"></div><div class="abs gbl" style="left:778px;top:63.5px">[Log]</div><div class="abs" style="left:780px;top:86px;width:340px;height:538px;border:1px solid #000;background:#708090;box-shadow:inset 1px 1px 0 #8894a2"></div><div class="abs" style="left:781px;top:87px;width:340px;height:20px;background:linear-gradient(#ffffff,#fbfbfc 45%,#eef0f3 55%,#eceef1)"></div><div class="abs" style="left:781px;top:105px;width:340px;height:1px;background:#e4e6ea"></div><div class="abs" style="left:781px;top:106px;width:340px;height:1px;background:#f4f5f7"></div><div class="abs" style="left:781px;top:107px;width:340px;height:1px;background:#a0a0a0"></div><div class="abs" style="left:781px;top:108px;width:340px;height:21px;background:#f9f9f9"></div><div class="abs" style="left:785px;top:108px;width:1px;height:21px;background:#a0a0a0"></div><div class="abs" style="left:785px;top:88px;width:1px;height:17px;background:#e0e2e6"></div><div class="abs" style="left:868px;top:108px;width:1px;height:21px;background:#a0a0a0"></div><div class="abs" style="left:868px;top:88px;width:1px;height:17px;background:#e0e2e6"></div><div class="abs" style="left:950px;top:108px;width:1px;height:21px;background:#a0a0a0"></div><div class="abs" style="left:950px;top:88px;width:1px;height:17px;background:#e0e2e6"></div><div class="abs" style="left:1037px;top:108px;width:1px;height:21px;background:#a0a0a0"></div><div class="abs" style="left:1037px;top:88px;width:1px;height:17px;background:#e0e2e6"></div><div class="abs" style="left:785px;top:87px;width:1px;height:42px;background:#a0a0a0"></div><div class="abs lbl" style="left:791px;top:91px;color:#000">Time (Sec)</div><div class="abs lbl" style="left:873px;top:91px;color:#000">Current (T)</div><div class="abs lbl" style="left:956px;top:91px;color:#000">Setpoint (T)</div><div class="abs lbl" style="left:1043px;top:91px;color:#000">Heater</div><div class="abs btn" style="left:783px;top:635px;width:163px;height:24px;padding-top:1px;line-height:25px">Clear Data</div><div class="abs btn" style="left:954px;top:635px;width:163px;height:24px;padding-top:1px;line-height:25px">Save Log File</div><div class="abs" style="left:5px;top:672px;width:1134px;height:1px;background:#8c8c8c"></div><div class="abs" style="left:5px;top:673px;width:1134px;height:1px;background:#fdfdfd"></div><div class="abs" style="left:5px;top:674px;width:1133px;height:19px;background:#f0eded"></div><div class="abs sbp" style="left:6px;top:675px;width:157px;height:15px">Status: Not connected to port</div><div class="abs sbp" style="left:169px;top:675px;width:32px;height:15px">Kp =</div><div class="abs sbp" style="left:206px;top:675px;width:27px;height:15px">Ki =</div><div class="abs sbp" style="left:239px;top:675px;width:31px;height:15px">Kd =</div><div class="abs sbp" style="left:276px;top:675px;width:106px;height:15px">Cycle Time (Secs) =</div><div class="abs sbp" style="left:387px;top:675px;width:50px;height:15px">pTerm =</div><div class="abs sbp" style="left:443px;top:675px;width:43px;height:15px">iTerm =</div><div class="abs sbp" style="left:492px;top:675px;width:50px;height:15px">dTerm =</div><div class="abs sbp" style="left:548px;top:675px;width:49px;height:15px">Output =</div><div class="abs" style="left:1135px;top:682px;width:2px;height:2px;background:#8a8a8a"></div><div class="abs" style="left:1131px;top:686px;width:2px;height:2px;background:#8a8a8a"></div><div class="abs" style="left:1135px;top:686px;width:2px;height:2px;background:#8a8a8a"></div><div class="abs" style="left:1127px;top:690px;width:2px;height:2px;background:#8a8a8a"></div><div class="abs" style="left:1131px;top:690px;width:2px;height:2px;background:#8a8a8a"></div><div class="abs" style="left:1135px;top:690px;width:2px;height:2px;background:#8a8a8a"></div>
</body></html>
